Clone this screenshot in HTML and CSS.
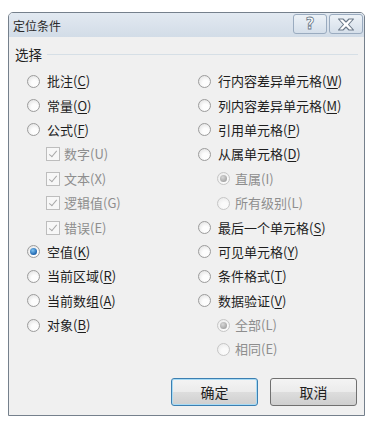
FILE: index.html
```html
<!DOCTYPE html>
<html lang="zh-CN">
<head>
    <meta charset="UTF-8">
    <title>定位条件</title>
    <link rel="stylesheet" href="styles.css">
</head>
<body>
    <div class="dialog">
        <div class="titlebar">
            <span class="title">定位条件</span>
            <div class="title-buttons">
                <button class="tb-btn help">?</button>
                <button class="tb-btn close">
                    <svg width="18" height="13" viewBox="0 0 18 13">
                        <path d="M1.5 1 H6 L9 4 L12 1 H16.5 L11.5 6.5 L16.5 12 H12 L9 9 L6 12 H1.5 L6.5 6.5 Z" fill="#fff" stroke="#6a7888" stroke-width="1.1" stroke-linejoin="round"/>
                    </svg>
                </button>
            </div>
        </div>

        <div class="content">
            <div class="group-head">
                <span>选择</span>
                <span class="group-line"></span>
            </div>

            <div class="options">
                <div class="col">
                    <label class="row"><span class="radio"></span>批注(<u>C</u>)</label>
                    <label class="row"><span class="radio"></span>常量(<u>O</u>)</label>
                    <label class="row"><span class="radio"></span>公式(<u>F</u>)</label>
                    <label class="row sub disabled"><span class="check"></span>数字(U)</label>
                    <label class="row sub disabled"><span class="check"></span>文本(X)</label>
                    <label class="row sub disabled"><span class="check"></span>逻辑值(G)</label>
                    <label class="row sub disabled"><span class="check"></span>错误(E)</label>
                    <label class="row"><span class="radio on"></span>空值(<u>K</u>)</label>
                    <label class="row"><span class="radio"></span>当前区域(<u>R</u>)</label>
                    <label class="row"><span class="radio"></span>当前数组(<u>A</u>)</label>
                    <label class="row"><span class="radio"></span>对象(<u>B</u>)</label>
                </div>
                <div class="col">
                    <label class="row"><span class="radio"></span>行内容差异单元格(<u>W</u>)</label>
                    <label class="row"><span class="radio"></span>列内容差异单元格(<u>M</u>)</label>
                    <label class="row"><span class="radio"></span>引用单元格(<u>P</u>)</label>
                    <label class="row"><span class="radio"></span>从属单元格(<u>D</u>)</label>
                    <label class="row sub disabled"><span class="radio on"></span>直属(I)</label>
                    <label class="row sub disabled"><span class="radio"></span>所有级别(L)</label>
                    <label class="row"><span class="radio"></span>最后一个单元格(<u>S</u>)</label>
                    <label class="row"><span class="radio"></span>可见单元格(<u>Y</u>)</label>
                    <label class="row"><span class="radio"></span>条件格式(<u>T</u>)</label>
                    <label class="row"><span class="radio"></span>数据验证(<u>V</u>)</label>
                    <label class="row sub disabled"><span class="radio on"></span>全部(L)</label>
                    <label class="row sub disabled"><span class="radio"></span>相同(E)</label>
                </div>
            </div>
        </div>

        <div class="actions">
            <button class="btn default">确定</button>
            <button class="btn">取消</button>
        </div>
    </div>
</body>
</html>
```

FILE: styles.css
```css
body {
    margin: 0;
    padding: 12px 0 0 8px;
    background: #fff;
    font-family: "Noto Sans CJK SC", "Microsoft YaHei", sans-serif;
    color: #1e1e1e;
}
.dialog {
    width: 357px;
    height: 404px;
    box-sizing: border-box;
    border: 1px solid #75808c;
    border-radius: 5px 5px 0 0;
    background: #f0f0f0;
    display: flex;
    flex-direction: column;
}
.titlebar {
    height: 24px;
    display: flex;
    align-items: center;
    padding-left: 4px;
    background: linear-gradient(#e2e9f1, #d2dce7);
    border-radius: 4px 4px 0 0;
}
.title {
    font-size: 12px;
    color: #2b2b2b;
}
.title-buttons {
    margin-left: auto;
    margin-right: 1px;
    align-self: flex-start;
    margin-top: 1px;
    display: flex;
    gap: 2px;
}
.tb-btn {
    width: 34px;
    height: 20px;
    padding: 0;
    border: 1px solid #9aabbf;
    border-radius: 3px;
    background: linear-gradient(#edf2f7, #d5dfea);
    display: flex;
    align-items: center;
    justify-content: center;
    font-family: "DejaVu Sans", sans-serif;
    font-size: 15px;
    font-weight: bold;
    line-height: 1;
    color: #fff;
    -webkit-text-stroke: 0.8px #6a7888;
}
.content {
    padding: 7px 0 0 0;
}
.group-head {
    height: 20px;
    display: flex;
    align-items: center;
    padding-left: 6px;
    font-size: 13.5px;
}
.group-line {
    flex: 1;
    height: 1px;
    margin: 0 6px 0 5px;
    background: #d6dfe6;
}
.options {
    display: grid;
    grid-template-columns: 171px 1fr;
    padding: 5px 0 0 18px;
}
.col {
    display: flex;
    flex-direction: column;
}
.row {
    height: 24.4px;
    display: flex;
    align-items: center;
    font-size: 13px;
    line-height: 20px;
    white-space: nowrap;
}
.row u {
    text-decoration-thickness: 1px;
    text-underline-offset: 2px;
}
.row.sub {
    padding-left: 19px;
}
.row.disabled {
    color: #8e8e8e;
}
.radio {
    width: 11px;
    height: 11px;
    border: 1px solid #9c9c9c;
    border-radius: 50%;
    background: radial-gradient(circle at 60% 65%, #fdfdfd 30%, #dcdcdc 100%);
    margin-right: 7px;
    position: relative;
    flex: none;
}
.radio.on::after {
    content: "";
    position: absolute;
    left: 2px;
    top: 2px;
    width: 7px;
    height: 7px;
    border-radius: 50%;
    background: radial-gradient(circle at 40% 35%, #7fc4f2, #1b62ad 70%, #143e78);
}
.disabled .radio {
    border-color: #c6c6c6;
    background: radial-gradient(circle at 60% 65%, #fafafa 30%, #e6e6e6 100%);
    margin-right: 5px;
}
.disabled .radio.on::after {
    background: radial-gradient(circle at 40% 35%, #d8d8d8, #a3a3a3 75%);
}
.check {
    width: 12px;
    height: 12px;
    border: 1px solid #bdbdbd;
    background: #f7f7f7;
    margin-right: 4px;
    position: relative;
    flex: none;
}
.check::after {
    content: "";
    position: absolute;
    left: 4px;
    top: 1px;
    width: 3px;
    height: 7px;
    border: solid #a8a8a8;
    border-width: 0 1.5px 1.5px 0;
    transform: rotate(40deg);
}
.actions {
    margin-top: auto;
    display: flex;
    justify-content: flex-end;
    gap: 12px;
    padding: 0 7px 9px 0;
}
.btn {
    width: 87px;
    height: 28px;
    border: 1px solid #707070;
    border-radius: 3px;
    background: linear-gradient(#f4f4f4 0%, #ebebeb 50%, #dddddd 51%, #cfcfcf 100%);
    font-family: "Noto Sans CJK SC", sans-serif;
    font-size: 14px;
    color: #1e1e1e;
    padding: 0;
}
.btn.default {
    border-color: #3c7fb1;
    box-shadow: inset 0 0 0 1px #a8dbf5;
}
```
